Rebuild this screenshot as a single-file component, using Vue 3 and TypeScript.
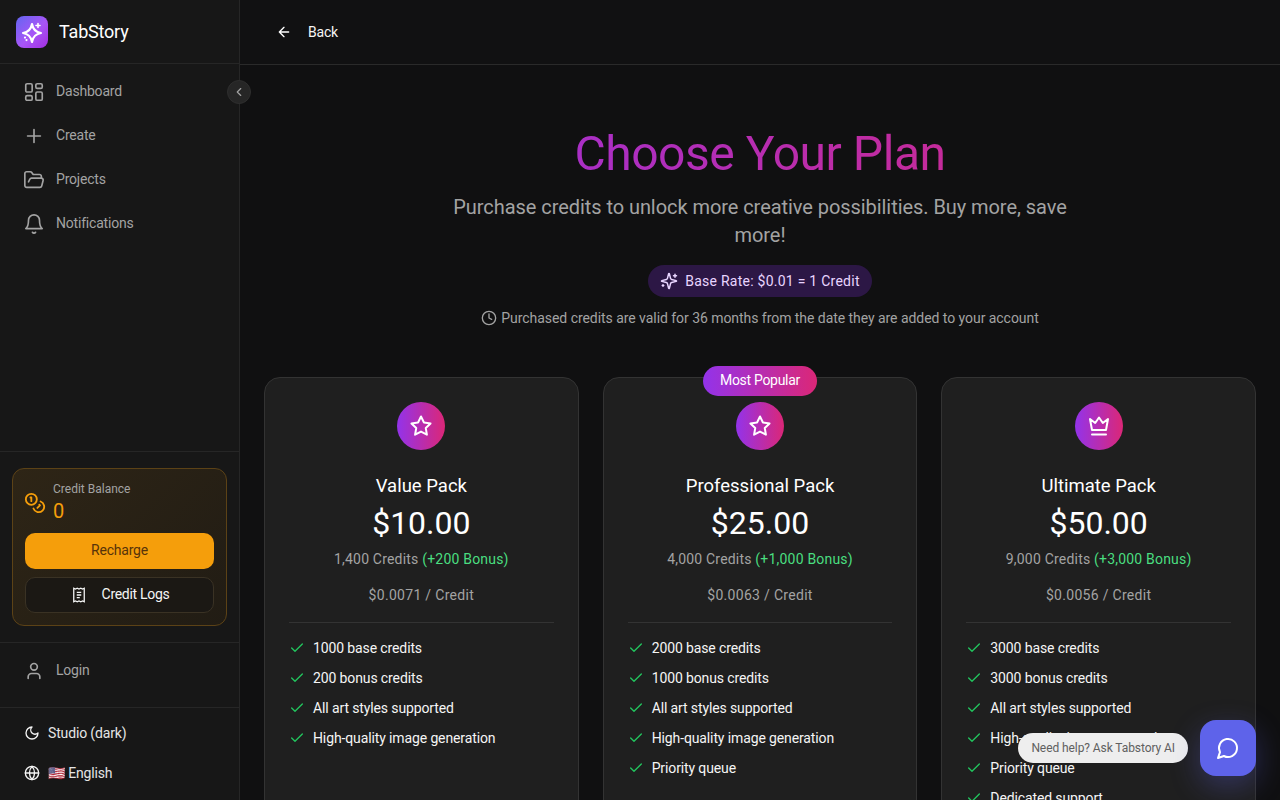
<script setup lang="ts">
interface Plan {
  name: string
  price: string
  credits: string
  bonus: string
  rate: string
  icon: 'star' | 'crown'
  popular?: boolean
  features: string[]
}

const navItems = ['Dashboard', 'Create', 'Projects', 'Notifications']

const plans: Plan[] = [
  {
    name: 'Value Pack',
    price: '$10.00',
    credits: '1,400 Credits',
    bonus: '(+200 Bonus)',
    rate: '$0.0071 / Credit',
    icon: 'star',
    features: ['1000 base credits', '200 bonus credits', 'All art styles supported', 'High-quality image generation']
  },
  {
    name: 'Professional Pack',
    price: '$25.00',
    credits: '4,000 Credits',
    bonus: '(+1,000 Bonus)',
    rate: '$0.0063 / Credit',
    icon: 'star',
    popular: true,
    features: ['2000 base credits', '1000 bonus credits', 'All art styles supported', 'High-quality image generation', 'Priority queue']
  },
  {
    name: 'Ultimate Pack',
    price: '$50.00',
    credits: '9,000 Credits',
    bonus: '(+3,000 Bonus)',
    rate: '$0.0056 / Credit',
    icon: 'crown',
    features: ['3000 base credits', '3000 bonus credits', 'All art styles supported', 'High-quality image generation', 'Priority queue', 'Dedicated support']
  }
]
</script>

<template>
  <div class="app">
    <aside class="sidebar">
      <div class="brand">
        <div class="logo">
          <svg width="32" height="32" viewBox="0 0 32 32" fill="none" stroke="#fff" stroke-width="2.200" stroke-linejoin="round" stroke-linecap="round">
            <path d="M16 8Q17.300 15.700 25 17Q17.300 18.300 16 26Q14.700 18.300 7 17Q14.700 15.700 16 8z" />
            <path d="M22 7.500v4M20 9.500h4" stroke-width="1.600" />
            <path d="M9 21.500v.1M10.500 24v.1" />
          </svg>
        </div>
        <span class="brand-name">TabStory</span>
      </div>

      <nav class="nav">
        <a v-for="item in navItems" :key="item" class="nav-item">
          <svg v-if="item === 'Dashboard'" class="nav-icon" viewBox="0 0 24 24">
            <rect x="3" y="3" width="7" height="9" rx="1.500" />
            <rect x="14" y="3" width="7" height="5" rx="1.500" />
            <rect x="14" y="12" width="7" height="9" rx="1.500" />
            <rect x="3" y="16" width="7" height="5" rx="1.500" />
          </svg>
          <svg v-else-if="item === 'Create'" class="nav-icon" viewBox="0 0 24 24">
            <path d="M5 12h14M12 5v14" />
          </svg>
          <svg v-else-if="item === 'Projects'" class="nav-icon" viewBox="0 0 24 24">
            <path d="M6 14l1.500-2.900A2 2 0 0 1 9.240 10H20a2 2 0 0 1 1.940 2.500l-1.540 6a2 2 0 0 1-1.950 1.500H4a2 2 0 0 1-2-2V5a2 2 0 0 1 2-2h3.900a2 2 0 0 1 1.690.9l.81 1.200a2 2 0 0 0 1.670.9H18a2 2 0 0 1 2 2v2" />
          </svg>
          <svg v-else class="nav-icon" viewBox="0 0 24 24">
            <path d="M6 8a6 6 0 0 1 12 0c0 7 3 9 3 9H3s3-2 3-9" />
            <path d="M10.300 21a1.940 1.940 0 0 0 3.400 0" />
          </svg>
          <span>{{ item }}</span>
        </a>
      </nav>

      <div class="balance-wrap">
        <div class="balance">
          <div class="balance-top">
            <svg class="coins" viewBox="0 0 24 24">
              <circle cx="8" cy="8" r="6" />
              <path d="M18.090 10.370A6 6 0 1 1 10.340 18" />
              <path d="M7 6h1v4" />
              <path d="M16.710 13.880l.7.710-2.820 2.820" />
            </svg>
            <div>
              <div class="balance-label">Credit Balance</div>
              <div class="balance-value">0</div>
            </div>
          </div>
          <button class="recharge"><span>Recharge</span></button>
          <button class="logs">
            <svg class="logs-icon" viewBox="0 0 24 24">
              <path d="M5 3v18l2.300-1 2.300 1 2.400-1 2.400 1 2.300-1 2.300 1V3l-2.300 1-2.300-1-2.400 1-2.400-1-2.300 1z" />
              <path d="M9 8.500h6M9 12h6M9 15.500h4" />
            </svg>
            <span>Credit Logs</span>
          </button>
        </div>
      </div>

      <div class="login">
        <svg class="login-icon" viewBox="0 0 24 24">
          <circle cx="12" cy="7" r="4" />
          <path d="M19 21v-2a4 4 0 0 0-4-4H9a4 4 0 0 0-4 4v2" />
        </svg>
        <span>Login</span>
      </div>

      <div class="prefs">
        <div class="pref">
          <svg class="pref-icon" viewBox="0 0 24 24">
            <path d="M12 3a6 6 0 0 0 9 9 9 9 0 1 1-9-9z" />
          </svg>
          <span>Studio (dark)</span>
        </div>
        <div class="pref">
          <svg class="pref-icon" viewBox="0 0 24 24">
            <circle cx="12" cy="12" r="10" />
            <path d="M2 12h20M12 2a15 15 0 0 1 0 20 15 15 0 0 1 0-20" />
          </svg>
          <span>🇺🇸 English</span>
        </div>
      </div>

      <button class="collapse" aria-label="Collapse sidebar">
        <svg width="14" height="14" viewBox="0 0 24 24" fill="none" stroke="#a3a3a3" stroke-width="2" stroke-linecap="round" stroke-linejoin="round">
          <path d="M15 18l-6-6 6-6" />
        </svg>
      </button>
    </aside>

    <main class="main">
      <header class="topbar">
        <button class="back">
          <svg width="16" height="16" viewBox="0 0 24 24" fill="none" stroke="#fff" stroke-width="2" stroke-linecap="round" stroke-linejoin="round">
            <path d="M19 12H5M12 19l-7-7 7-7" />
          </svg>
          <span>Back</span>
        </button>
      </header>

      <section class="content">
        <div class="hero">
          <h1 class="title">Choose Your Plan</h1>
          <p class="subtitle">Purchase credits to unlock more creative possibilities. Buy more, save more!</p>
          <div class="rate-pill">
            <svg width="18" height="18" viewBox="0 0 24 24" fill="none" stroke="#e9d5ff" stroke-width="2" stroke-linecap="round" stroke-linejoin="round">
              <path d="M9.937 15.500A2 2 0 0 0 8.500 14.063l-6.135-1.582a.5.5 0 0 1 0-.962L8.500 9.936A2 2 0 0 0 9.937 8.500l1.582-6.135a.5.5 0 0 1 .963 0L14.063 8.500A2 2 0 0 0 15.500 9.937l6.135 1.581a.5.5 0 0 1 0 .964L15.500 14.063a2 2 0 0 0-1.437 1.437l-1.582 6.135a.5.5 0 0 1-.963 0z" />
              <path d="M20 3v4M22 5h-4M4 17v2M5 18H3" />
            </svg>
            <span>Base Rate: $0.01 = 1 Credit</span>
          </div>
          <p class="validity">
            <svg width="16" height="16" viewBox="0 0 24 24" fill="none" stroke="#a3a3a3" stroke-width="2" stroke-linecap="round" stroke-linejoin="round">
              <circle cx="12" cy="12" r="10" />
              <path d="M12 6v6l4 2" />
            </svg>
            <span>Purchased credits are valid for 36 months from the date they are added to your account</span>
          </p>
        </div>

        <div class="plans">
          <article v-for="plan in plans" :key="plan.name" class="card">
            <div v-if="plan.popular" class="popular">Most Popular</div>
            <div class="plan-icon">
              <svg v-if="plan.icon === 'star'" width="24" height="24" viewBox="0 0 24 24" fill="none" stroke="#fff" stroke-width="2" stroke-linecap="round" stroke-linejoin="round">
                <path d="M12 2.500l2.950 5.980 6.600.960-4.780 4.650 1.130 6.570L12 17.560l-5.900 3.100 1.130-6.570-4.780-4.650 6.600-.960z" />
              </svg>
              <svg v-else width="24" height="24" viewBox="0 0 24 24" fill="none" stroke="#fff" stroke-width="2" stroke-linecap="round" stroke-linejoin="round">
                <path d="M12 3.500l3.800 5.500L21 5l-2 11H5L3 5l5.200 4z" />
                <path d="M5 20.500h14" />
              </svg>
            </div>
            <h2 class="plan-name">{{ plan.name }}</h2>
            <div class="plan-price">{{ plan.price }}</div>
            <div class="plan-credits">{{ plan.credits }} <span class="bonus">{{ plan.bonus }}</span></div>
            <div class="plan-rate">{{ plan.rate }}</div>
            <ul class="features">
              <li v-for="feature in plan.features" :key="feature">
                <svg width="16" height="16" viewBox="0 0 24 24" fill="none" stroke="#22c55e" stroke-width="2" stroke-linecap="round" stroke-linejoin="round">
                  <path d="M20 6L9 17l-5-5" />
                </svg>
                <span>{{ feature }}</span>
              </li>
            </ul>
          </article>
        </div>
      </section>
    </main>

    <div class="help-tip">Need help? Ask Tabstory AI</div>
    <button class="chat" aria-label="Open chat">
      <svg width="24" height="24" viewBox="0 0 24 24" fill="none" stroke="#fff" stroke-width="2" stroke-linecap="round" stroke-linejoin="round">
        <path d="M7.900 20A9 9 0 1 0 4 16.100L2 22z" />
      </svg>
    </button>
  </div>
</template>

<style>
html,
body {
  margin: 0;
  background: #101011;
}
</style>

<style scoped>
.app {
  display: flex;
  position: relative;
  height: 100vh;
  overflow: hidden;
  background: #101011;
  color: #fff;
  font-family: Roboto, "Liberation Sans", sans-serif;
}

.sidebar {
  position: relative;
  display: flex;
  flex-direction: column;
  flex: 0 0 240px;
  box-sizing: border-box;
  width: 240px;
  background: #171717;
  border-right: 1px solid #262626;
}

.brand {
  display: flex;
  align-items: center;
  gap: 11px;
  height: 64px;
  box-sizing: border-box;
  padding: 0 16px;
  border-bottom: 1px solid #262626;
}

.logo {
  display: flex;
  align-items: center;
  justify-content: center;
  width: 32px;
  height: 32px;
  border-radius: 8px;
  background: linear-gradient(135deg, #6366f1, #a855f7 55%, #a32ee0);
}

.brand-name {
  font-size: 18px;
  line-height: 28px;
  letter-spacing: -0.2px;
}

.nav {
  flex: 1;
  display: flex;
  flex-direction: column;
  gap: 4px;
  padding: 8px;
}

.nav-item {
  display: flex;
  align-items: center;
  gap: 11px;
  height: 40px;
  padding: 0 15px;
  font-size: 14px;
  letter-spacing: -0.2px;
  color: #a3a3a3;
}

.nav-item span,
.login span,
.recharge span,
.logs span {
  padding-bottom: 2px;
}

.nav-icon {
  flex: none;
  width: 22px;
  height: 22px;
  fill: none;
  stroke: #a3a3a3;
  stroke-width: 1.800;
  stroke-linecap: round;
  stroke-linejoin: round;
}

.balance-wrap {
  padding: 16px 12px;
  border-top: 1px solid #262626;
}

.balance {
  display: flex;
  flex-direction: column;
  gap: 8px;
  box-sizing: border-box;
  padding: 12px;
  border: 1px solid #5c4216;
  border-radius: 12px;
  background: linear-gradient(135deg, #2e2516, #211c14);
}

.balance-top {
  display: flex;
  align-items: center;
  gap: 7px;
  margin-left: -1px;
}

.coins {
  flex: none;
  width: 22px;
  height: 22px;
  fill: none;
  stroke: #f59e0b;
  stroke-width: 2;
  stroke-linecap: round;
  stroke-linejoin: round;
}

.balance-label {
  font-size: 12px;
  line-height: 16px;
  color: #a3a3a3;
}

.balance-value {
  font-size: 20px;
  line-height: 28px;
  color: #f59e0b;
}

.recharge,
.logs {
  display: flex;
  align-items: center;
  justify-content: center;
  height: 36px;
  box-sizing: border-box;
  border-radius: 10px;
  font: inherit;
  font-size: 14px;
  letter-spacing: -0.2px;
}

.recharge {
  border: 0;
  background: #f59e0b;
  color: #57330a;
}

.logs {
  gap: 14px;
  border: 1px solid #3a3224;
  background: #1b1814;
  letter-spacing: -0.3px;
  color: #f5f5f5;
}

.logs-icon {
  width: 18px;
  height: 18px;
  fill: none;
  stroke: #f5f5f5;
  stroke-width: 1.700;
}

.login {
  display: flex;
  align-items: center;
  gap: 12px;
  height: 65px;
  box-sizing: border-box;
  padding: 0 24px 9px;
  border-top: 1px solid #262626;
  font-size: 14px;
  letter-spacing: -0.2px;
  color: #a3a3a3;
}

.login-icon {
  flex: none;
  width: 20px;
  height: 20px;
  fill: none;
  stroke: #a3a3a3;
  stroke-width: 2;
  stroke-linecap: round;
  stroke-linejoin: round;
}

.prefs {
  display: flex;
  flex-direction: column;
  gap: 12px;
  height: 93px;
  box-sizing: border-box;
  padding: 11px 24px 0;
  border-top: 1px solid #262626;
}

.pref {
  display: flex;
  align-items: center;
  gap: 8px;
  height: 28px;
  font-size: 14px;
  letter-spacing: -0.15px;
  color: #e5e5e5;
}

.pref-icon {
  flex: none;
  width: 16px;
  height: 16px;
  fill: none;
  stroke: #f5f5f5;
  stroke-width: 2;
  stroke-linecap: round;
  stroke-linejoin: round;
}

.collapse {
  position: absolute;
  top: 80px;
  right: -12px;
  display: flex;
  align-items: center;
  justify-content: center;
  width: 24px;
  height: 24px;
  padding: 0;
  border: 1px solid #2e2e2e;
  border-radius: 50%;
  background: #262626;
}

.main {
  flex: 1;
  min-width: 0;
}

.topbar {
  display: flex;
  align-items: center;
  height: 65px;
  box-sizing: border-box;
  padding: 0 24px;
  border-bottom: 1px solid #2a2a2a;
  background: #111112;
}

.back {
  display: flex;
  align-items: center;
  gap: 16px;
  height: 36px;
  padding: 0 12px;
  border: 0;
  background: none;
  color: #f5f5f5;
  font: inherit;
  font-size: 14px;
  letter-spacing: -0.2px;
}

.content {
  padding: 0 24px;
}

.hero {
  display: flex;
  flex-direction: column;
  align-items: center;
  padding-top: 61px;
  text-align: center;
}

.title {
  align-self: stretch;
  margin: 0;
  font-size: 48px;
  font-weight: 400;
  line-height: 56px;
  letter-spacing: -0.45px;
  background: linear-gradient(90deg, #9333ea, #db2777);
  -webkit-background-clip: text;
  background-clip: text;
  color: transparent;
}

.subtitle {
  width: 640px;
  margin: 11px 0 0;
  font-size: 20px;
  line-height: 28px;
  letter-spacing: -0.06px;
  color: #a3a3a3;
}

.rate-pill {
  display: flex;
  align-items: center;
  gap: 7px;
  height: 32px;
  margin-top: 16px;
  padding: 0 12px;
  border-radius: 16px;
  background: #2c1745;
  font-size: 14px;
  letter-spacing: 0.25px;
  color: #e9d5ff;
}

.validity {
  display: flex;
  align-items: center;
  gap: 4px;
  margin: 11px 0 0;
  font-size: 14px;
  line-height: 20px;
  letter-spacing: -0.05px;
  color: #a3a3a3;
}

.plans {
  display: grid;
  grid-template-columns: repeat(3, 1fr);
  gap: 24px;
  margin-top: 49px;
}

.card {
  position: relative;
  display: flex;
  flex-direction: column;
  align-items: center;
  box-sizing: border-box;
  height: 480px;
  padding: 24px;
  border: 1px solid #333;
  border-radius: 16px;
  background: #1f1f1f;
}

.popular {
  position: absolute;
  top: -12px;
  left: 50%;
  transform: translateX(-50%);
  padding: 0 17px;
  height: 30px;
  line-height: 28px;
  border-radius: 15px;
  background: linear-gradient(90deg, #9333ea, #db2777);
  font-size: 14px;
  letter-spacing: -0.3px;
  white-space: nowrap;
}

.plan-icon {
  display: flex;
  align-items: center;
  justify-content: center;
  width: 48px;
  height: 48px;
  border-radius: 50%;
  background: linear-gradient(90deg, #9333ea, #db2777);
}

.plan-name {
  margin: 22px 0 0;
  font-size: 18.500px;
  font-weight: 400;
  line-height: 28px;
}

.plan-price {
  margin-top: 5px;
  font-size: 32px;
  line-height: 36px;
}

.plan-credits {
  margin-top: 8px;
  font-size: 14px;
  line-height: 20px;
  letter-spacing: 0.2px;
  color: #a3a3a3;
}

.bonus {
  color: #4ade80;
}

.plan-rate {
  margin-top: 16px;
  font-size: 14px;
  line-height: 20px;
  letter-spacing: 0.3px;
  color: #a3a3a3;
}

.features {
  align-self: stretch;
  display: flex;
  flex-direction: column;
  gap: 8px;
  margin: 17px 0 0;
  padding: 14px 0 0;
  border-top: 1px solid #333;
  list-style: none;
}

.features li {
  display: flex;
  align-items: center;
  gap: 8px;
  height: 22px;
  font-size: 14px;
  letter-spacing: -0.12px;
  color: #f5f5f5;
}

.help-tip {
  position: absolute;
  right: 92px;
  bottom: 37px;
  height: 30px;
  padding: 0 13px;
  line-height: 30px;
  border-radius: 15px;
  background: #eeeeee;
  font-size: 12px;
  letter-spacing: -0.08px;
  color: #606060;
}

.chat {
  position: absolute;
  right: 24px;
  bottom: 24px;
  display: flex;
  align-items: center;
  justify-content: center;
  width: 56px;
  height: 56px;
  padding: 0;
  border: 0;
  border-radius: 16px;
  background: #5e63ea;
  box-shadow: 0 10px 30px rgba(99, 102, 241, 0.3);
}
</style>
